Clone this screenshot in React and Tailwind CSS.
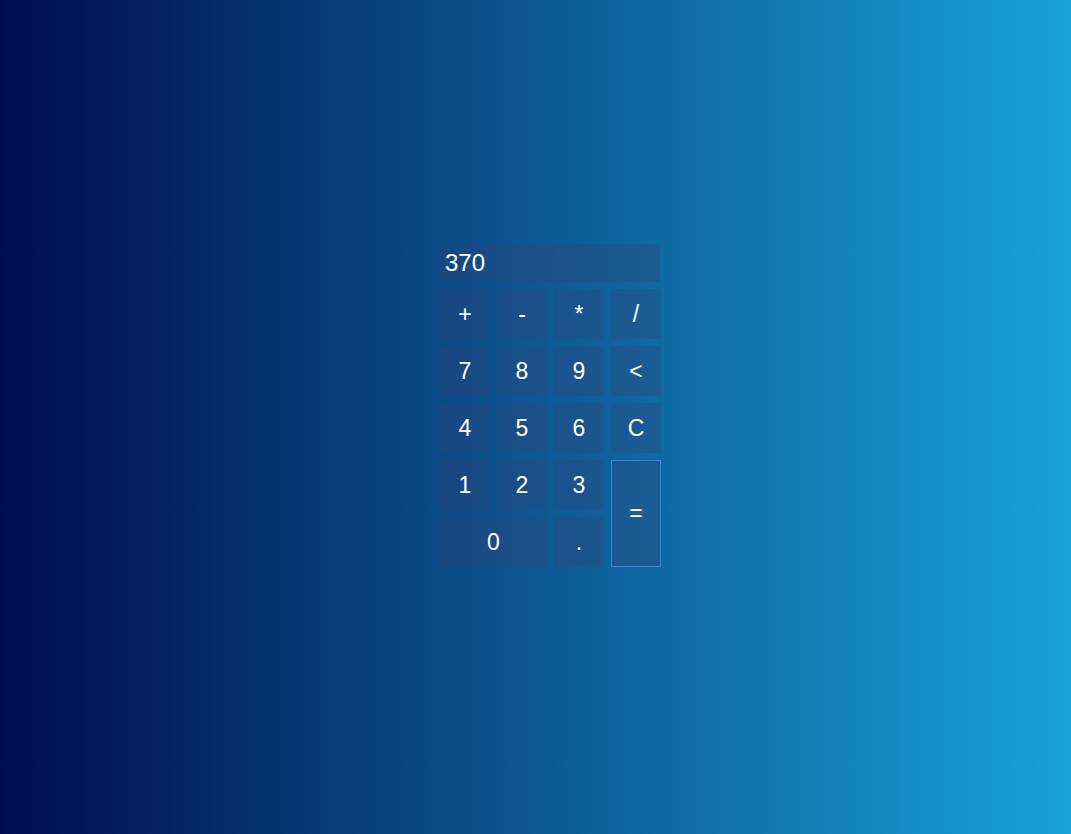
import React, { useState } from "react";

const keys = [
  { label: "+" },
  { label: "-" },
  { label: "*" },
  { label: "/" },
  { label: "7" },
  { label: "8" },
  { label: "9" },
  { label: "<" },
  { label: "4" },
  { label: "5" },
  { label: "6" },
  { label: "C" },
  { label: "1" },
  { label: "2" },
  { label: "3" },
  { label: "=", cls: "row-span-2 border border-[#3b7fe0]" },
  { label: "0", cls: "col-span-2" },
  { label: "." },
];

const App = () => {
  const [value, setValue] = useState("370");

  const press = (k) => {
    if (k === "C") return setValue("");
    if (k === "<") return setValue((v) => v.slice(0, -1));
    if (k === "=") {
      try {
        // eslint-disable-next-line no-new-func
        setValue(String(Function(`return (${value})`)()));
      } catch (e) {
        setValue("Error");
      }
      return;
    }
    setValue((v) => v + k);
  };

  return (
    <div className="min-h-screen w-full bg-[linear-gradient(to_right,#000c50,#18a4d6)] pt-[244px] pl-[30px] flex justify-center items-start font-['Liberation_Sans',Arial,sans-serif]">
      <div className="grid grid-cols-[50px_50px_50px_50px] grid-rows-[38px_50px_50px_50px_50px_50px] gap-[7px]">
        {/* display */}
        <div className="col-span-4 w-[220px] h-[38px] bg-[rgba(60,64,116,0.3)] text-white text-[24px] leading-[38px] pl-[5px]">
          {value}
        </div>

        {keys.map((k) => (
          <button
            key={k.label}
            onClick={() => press(k.label)}
            className={`bg-[rgba(60,64,116,0.3)] text-white text-[23px] flex items-center justify-center ${k.cls || ""}`}
          >
            {k.label}
          </button>
        ))}
      </div>
    </div>
  );
};

export default App;
